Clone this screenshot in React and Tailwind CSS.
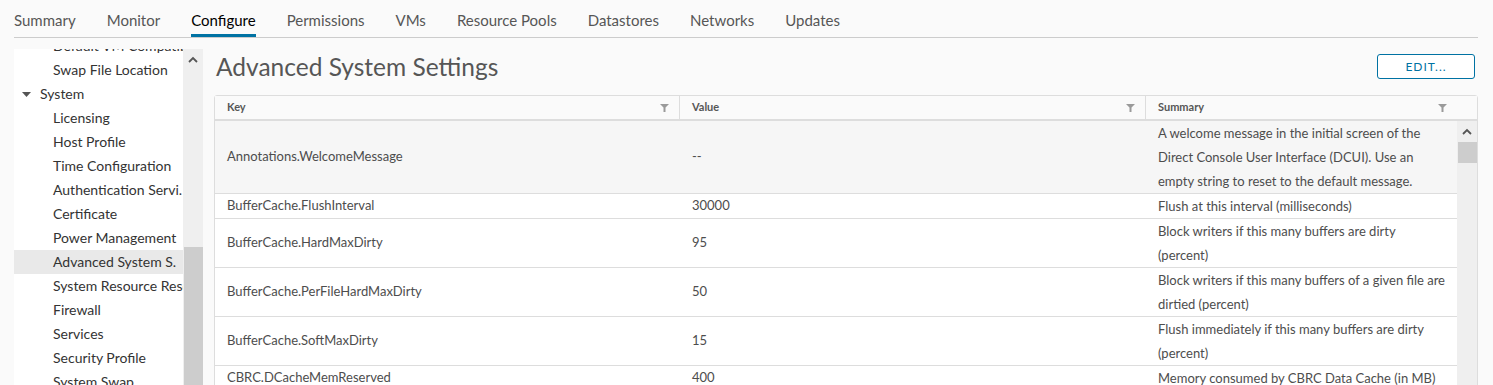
import React from "react";

const tabs = [
  "Summary",
  "Monitor",
  "Configure",
  "Permissions",
  "VMs",
  "Resource Pools",
  "Datastores",
  "Networks",
  "Updates",
];

const navItems = [
  { label: "Default VM Compatibility", child: true },
  { label: "Swap File Location", child: true },
  { label: "System", group: true },
  { label: "Licensing", child: true },
  { label: "Host Profile", child: true },
  { label: "Time Configuration", child: true },
  { label: "Authentication Servi.", child: true },
  { label: "Certificate", child: true },
  { label: "Power Management", child: true },
  { label: "Advanced System S.", child: true, active: true },
  { label: "System Resource Reservation", child: true },
  { label: "Firewall", child: true },
  { label: "Services", child: true },
  { label: "Security Profile", child: true },
  { label: "System Swap", child: true },
];

const rows = [
  {
    key: "Annotations.WelcomeMessage",
    value: "--",
    summary: [
      "A welcome message in the initial screen of the",
      "Direct Console User Interface (DCUI). Use an",
      "empty string to reset to the default message.",
    ],
    shaded: true,
  },
  {
    key: "BufferCache.FlushInterval",
    value: "30000",
    summary: ["Flush at this interval (milliseconds)"],
  },
  {
    key: "BufferCache.HardMaxDirty",
    value: "95",
    summary: ["Block writers if this many buffers are dirty", "(percent)"],
  },
  {
    key: "BufferCache.PerFileHardMaxDirty",
    value: "50",
    summary: [
      "Block writers if this many buffers of a given file are",
      "dirtied (percent)",
    ],
  },
  {
    key: "BufferCache.SoftMaxDirty",
    value: "15",
    summary: ["Flush immediately if this many buffers are dirty", "(percent)"],
  },
  {
    key: "CBRC.DCacheMemReserved",
    value: "400",
    summary: ["Memory consumed by CBRC Data Cache (in MB)"],
  },
];

const Funnel = () => (
  <svg width="9" height="8" viewBox="0 0 9 8">
    <path d="M0 0 H9 L5.5 3.5 V8 H3.5 V3.5 Z" fill="#9a9a9a" />
  </svg>
);

const ChevronUp = () => (
  <svg width="10" height="7" viewBox="0 0 10 7">
    <path d="M1 6 L5 2 L9 6" fill="none" stroke="#555" strokeWidth="1.8" />
  </svg>
);

const App = () => {
  return (
    <div
      className="w-[1493px] h-[385px] overflow-hidden bg-[#fafafa] text-[#333]"
      style={{ fontFamily: "Lato, 'Open Sans', sans-serif" }}
    >
      {/* tabs */}
      <div className="ml-[14px] mr-[15px] h-[38px] flex gap-[31px] border-b border-[#ccc]">
        {tabs.map((t) => (
          <div
            key={t}
            className={
              t === "Configure"
                ? "h-[37px] pt-[10px] text-[15px] leading-[20px] text-[#000] border-b-[3px] border-[#0072a3]"
                : "h-[37px] pt-[10px] text-[15px] leading-[20px] text-[#565656]"
            }
          >
            {t}
          </div>
        ))}
      </div>

      <div className="flex mt-[11px] h-[336px]">
        {/* sidebar */}
        <div className="ml-[14px] w-[169px] bg-white overflow-hidden">
          <div className="-mt-[15px]">
            {navItems.map((item) => (
              <div
                key={item.label}
                className={
                  "h-[24px] leading-[24px] text-[14px] whitespace-nowrap overflow-hidden " +
                  (item.active ? "bg-[#e9e9e9] " : "") +
                  (item.group ? "pl-[8px] flex items-center" : "pl-[39px]")
                }
              >
                {item.group && (
                  <svg width="9" height="5" viewBox="0 0 9 5" className="mr-[9px]">
                    <path d="M0 0 H9 L4.5 5 Z" fill="#555" />
                  </svg>
                )}
                {item.label}
              </div>
            ))}
          </div>
        </div>
        <div className="w-[20px] bg-[#efefef] flex flex-col items-center">
          <div className="h-[20px] flex items-center justify-center">
            <ChevronUp />
          </div>
          <div className="mt-[178px] w-[19px] flex-1 bg-[#cdcdcd]" />
        </div>

        {/* main */}
        <div className="flex-1 pl-[11px] pr-[15px]">
          <div className="flex justify-between items-start">
            <h1 className="mt-[1px] pl-[2px] text-[24.5px] leading-[34px] text-[#565656]">
              Advanced System Settings
            </h1>
            <button className="mt-[5px] mr-[3px] w-[98px] h-[25px] border border-[#0072a3] rounded-[3px] text-[#0072a3] text-[12px] tracking-[1px] bg-white">
              EDIT...
            </button>
          </div>

          <div className="mt-[11px] border border-[#ddd] rounded-t-[3px] bg-white">
            {/* header */}
            <div className="flex h-[25px] bg-[#fafafa] border-b-2 border-[#ddd] text-[11px] font-bold text-[#565656] pr-[20px]">
              <div className="w-[465px] flex items-center justify-between pl-[12px] pr-[10px] border-r border-[#ddd]">
                <span>Key</span>
                <Funnel />
              </div>
              <div className="w-[466px] flex items-center justify-between pl-[12px] pr-[10px] border-r border-[#ddd]">
                <span>Value</span>
                <Funnel />
              </div>
              <div className="flex-1 flex items-center justify-between pl-[12px] pr-[10px]">
                <span>Summary</span>
                <Funnel />
              </div>
            </div>

            {/* body */}
            <div className="flex">
              <div className="flex-1">
                {rows.map((r) => (
                  <div
                    key={r.key}
                    className={
                      "flex border-b border-[#ddd] text-[13px] text-[#4d4d4d] " +
                      (r.shaded ? "bg-[#f6f6f6]" : "bg-white")
                    }
                  >
                    <div className="w-[465px] pl-[12px] flex items-center">{r.key}</div>
                    <div className="w-[466px] pl-[12px] flex items-center">{r.value}</div>
                    <div className="flex-1 pl-[12px] leading-[24px] whitespace-nowrap">
                      {r.summary.map((s) => (
                        <div key={s}>{s}</div>
                      ))}
                    </div>
                  </div>
                ))}
              </div>
              <div className="w-[20px] bg-[#efefef] flex flex-col items-center">
                <div className="h-[21px] flex items-center justify-center">
                  <ChevronUp />
                </div>
                <div className="w-[19px] h-[21px] bg-[#cdcdcd]" />
              </div>
            </div>
          </div>
        </div>
      </div>
    </div>
  );
};

export default App;
